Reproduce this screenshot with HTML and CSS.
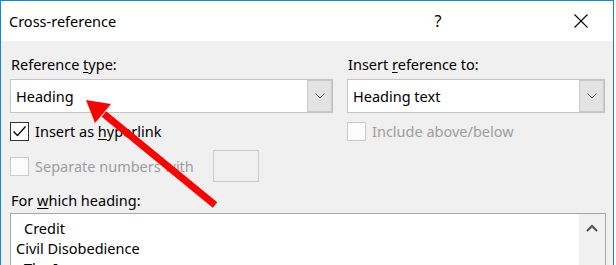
FILE: index.html
```html
<!DOCTYPE html>
<html lang="en">
<head>
  <title>Cross-reference</title>
  <link rel="stylesheet" href="styles.css">
</head>
<body>

  <div class="window">
    <!-- Title bar -->
    <div class="titlebar">
      <span class="title">Cross-reference</span>
      <span class="title-btn help">?</span>
      <span class="title-btn close">
        <svg width="16" height="16" viewBox="0 0 16 16"><path d="M1.5 1.5 L14.5 14.5 M14.5 1.5 L1.5 14.5" stroke="#000" stroke-width="1.1" fill="none"/></svg>
      </span>
    </div>

    <div class="dialog">
      <div class="top-grid">
        <div class="label">Reference <u>t</u>ype:</div>
        <div class="label">Insert <u>r</u>eference to:</div>

        <div class="combo">
          <span class="combo-value">Heading</span>
          <span class="combo-btn">
            <svg width="10" height="6" viewBox="0 0 10 6"><path d="M0.5 0.5 L5 5 L9.5 0.5" stroke="#606060" stroke-width="1" fill="none"/></svg>
          </span>
        </div>
        <div class="combo">
          <span class="combo-value">Heading text</span>
          <span class="combo-btn">
            <svg width="10" height="6" viewBox="0 0 10 6"><path d="M0.5 0.5 L5 5 L9.5 0.5" stroke="#606060" stroke-width="1" fill="none"/></svg>
          </span>
        </div>

        <div class="check-row">
          <span class="checkbox">
            <svg width="17" height="17" viewBox="0 0 17 17"><path d="M2.5 8.5 L6.5 12.5 L14.5 3.5" stroke="#000" stroke-width="1.3" fill="none"/></svg>
          </span>
          <span>Insert as <u>h</u>yperlink</span>
        </div>
        <div class="check-row disabled">
          <span class="checkbox"></span>
          <span>Include above/below</span>
        </div>

        <div class="sep-row disabled">
          <span class="checkbox"></span>
          <span class="sep-text">Separate numbers with</span>
          <span class="small-input"></span>
        </div>
      </div>

      <div class="label list-label">For <u>w</u>hich heading:</div>
      <div class="listbox">
        <div class="items">
          <div class="item indent">Credit</div>
          <div class="item">Civil Disobedience</div>
          <div class="item indent">The Issue</div>
        </div>
        <div class="scrollbar">
          <svg width="12" height="8" viewBox="0 0 12 8"><path d="M1 7 L6 2 L11 7" stroke="#505050" stroke-width="2" fill="none"/></svg>
        </div>
      </div>
    </div>
  </div>

  <!-- Red annotation arrow over the dialog -->
  <svg class="arrow" width="616" height="265" viewBox="0 0 616 265">
    <line x1="104" y1="114" x2="215" y2="205" stroke="#f00" stroke-width="7"/>
    <polygon points="86,100 95,123 111,104" fill="#f00"/>
  </svg>

</body>
</html>
```

FILE: styles.css
```css
body {
  margin: 0;
  background: #fff;
  font-family: "Noto Sans", "Liberation Sans", sans-serif;
  font-size: 14.5px;
  color: #000;
  overflow: hidden;
}

u {
  text-decoration: underline;
  text-underline-offset: 2px;
}

.window {
  position: relative;
  width: 614px;
  height: 265px;
  box-sizing: border-box;
  border: 1px solid #1883d7;
  border-bottom: none;
  background: #f0f0f0;
  overflow: hidden;
}

.titlebar {
  display: flex;
  align-items: center;
  height: 40px;
  background: #fff;
}

.title {
  padding-left: 8px;
  font-size: 14.5px;
  flex: 1;
}

.title-btn {
  width: 40px;
  display: flex;
  justify-content: center;
  font-size: 16px;
}

.help {
  margin-right: 103px;
}

.close {
  margin-right: 12px;
}

.dialog {
  padding: 13px 7px 0 9px;
}

.top-grid {
  display: grid;
  grid-template-columns: 323px 258px;
  column-gap: 14px;
}

.label {
  height: 20px;
  line-height: 20px;
  padding-left: 1px;
  margin-bottom: 5px;
}

.combo {
  display: flex;
  height: 34px;
  box-sizing: border-box;
  border: 1px solid #c4c4c4;
  background: #fff;
}

.combo-value {
  flex: 1;
  line-height: 32px;
  padding-left: 5px;
}

.combo-btn {
  width: 25px;
  box-sizing: border-box;
  border: 1px solid #c9c9c9;
  background: #e3e3e3;
  display: flex;
  align-items: center;
  justify-content: center;
}

.check-row {
  display: flex;
  align-items: center;
  gap: 6px;
  height: 20px;
  margin-top: 8px;
}

.checkbox {
  width: 19px;
  height: 19px;
  box-sizing: border-box;
  border: 1px solid #333;
  background: #fff;
  display: flex;
  align-items: center;
  justify-content: center;
}

.disabled {
  color: #9d9d9d;
}

.disabled .checkbox {
  border-color: #cccccc;
  background: #fcfcfc;
}

.sep-row {
  display: flex;
  align-items: center;
  gap: 6px;
  height: 32px;
  margin-top: 9px;
}

.sep-text {
  width: 172px;
}

.small-input {
  width: 46px;
  height: 32px;
  box-sizing: border-box;
  border: 1px solid #cccccc;
  background: #f0f0f0;
}

.list-label {
  margin-top: 8px;
  margin-bottom: 3px;
}

.listbox {
  display: flex;
  height: 80px;
  box-sizing: border-box;
  border: 1px solid #a6a6a6;
  background: #fff;
}

.items {
  flex: 1;
  padding: 4px 0 0 5px;
}

.item {
  height: 20px;
  line-height: 20px;
}

.indent {
  padding-left: 8px;
}

.scrollbar {
  width: 26px;
  background: #f0f0f0;
  display: flex;
  justify-content: center;
  padding-top: 10px;
  box-sizing: border-box;
}

.arrow {
  position: absolute;
  left: 0;
  top: 0;
}
```
